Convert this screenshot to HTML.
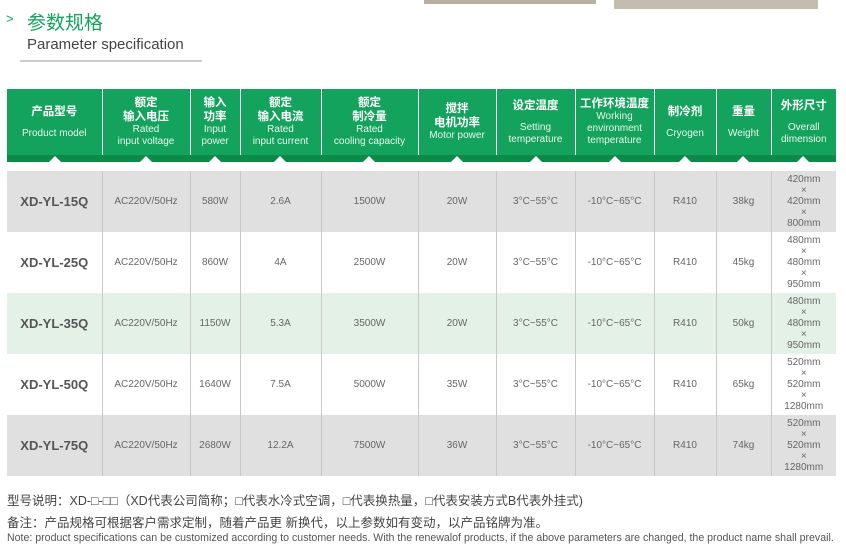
<!DOCTYPE html>
<html><head><meta charset="utf-8"><style>
*{margin:0;padding:0;box-sizing:border-box}
body{width:846px;height:555px;background:#fff;font-family:"Liberation Sans","Noto Sans CJK SC",sans-serif;position:relative;overflow:hidden;color:#444}
.abs{position:absolute}
table{border-collapse:collapse;position:absolute;left:7px;table-layout:fixed}
#hd td{background:#14a35c;color:#fff;text-align:center;vertical-align:middle;border-left:1px solid #fff;height:66px;font-size:10px;line-height:12px;position:relative}
#hd td:first-child{border-left:none}
.cn{font-size:11.5px;font-weight:bold;line-height:14px}
.en{font-weight:normal;color:#e8f6ee}
#strip{left:7px;top:155px;width:829px;height:7px;background:#0b8a48}
#bd td{text-align:center;vertical-align:middle;height:61px;font-size:10px;color:#666;border-left:1px solid #c8c8c8;font-family:"Liberation Sans",sans-serif}
#bd td:first-child{border-left:none;font-weight:bold;font-size:13px;color:#555}
.g td{background:#e0e0e0}.w td{background:#fff}.l td{background:#e3f1e6}
.dim{font-size:9.5px;line-height:11px}
.tri{position:absolute;top:156px;width:0;height:0;border-left:6px solid transparent;border-right:6px solid transparent;border-bottom:6px solid #fff}
</style></head><body>
<div class="abs" style="left:424px;top:0;width:172px;height:4px;background:#b8b0a0"></div>
<div class="abs" style="left:614px;top:0;width:204px;height:9px;background:#c4bcae"></div>
<div class="abs" style="left:6px;top:11px;font-size:13px;color:#14a35c">&gt;</div>
<div class="abs" style="left:27px;top:8px;font-size:19px;color:#14a35c">参数规格</div>
<div class="abs" style="left:27px;top:36px;font-size:15px;color:#444">Parameter specification</div>
<div class="abs" style="left:20px;top:60px;width:182px;height:2px;background:#ccc"></div>
<table id="hd" style="top:89px"><colgroup><col style="width:95px"><col style="width:88px"><col style="width:50px"><col style="width:81px"><col style="width:97px"><col style="width:78px"><col style="width:79px"><col style="width:79px"><col style="width:62px"><col style="width:55px"><col style="width:65px"></colgroup>
<tr>
<td><div class="cn">产品型号</div><div class="en" style="margin-top:9px">Product model</div></td>
<td><div class="cn">额定<br>输入电压</div><div class="en">Rated<br>input voltage</div></td>
<td><div class="cn">输入<br>功率</div><div class="en">Input<br>power</div></td>
<td><div class="cn">额定<br>输入电流</div><div class="en">Rated<br>input current</div></td>
<td><div class="cn">额定<br>制冷量</div><div class="en">Rated<br>cooling capacity</div></td>
<td><div class="cn">搅拌<br>电机功率</div><div class="en">Motor power</div></td>
<td><div class="cn">设定温度</div><div class="en" style="margin-top:9px">Setting<br>temperature</div></td>
<td><div class="cn">工作环境温度</div><div class="en">Working<br>environment<br>temperature</div></td>
<td><div class="cn">制冷剂</div><div class="en" style="margin-top:9px">Cryogen</div></td>
<td><div class="cn">重量</div><div class="en" style="margin-top:9px">Weight</div></td>
<td><div class="cn">外形尺寸</div><div class="en" style="margin-top:9px">Overall<br>dimension</div></td>
</tr></table>
<div class="abs" id="strip"></div>
<div class="tri" style="left:49px"></div><div class="tri" style="left:140px"></div><div class="tri" style="left:209px"></div><div class="tri" style="left:274px"></div><div class="tri" style="left:363px"></div><div class="tri" style="left:451px"></div><div class="tri" style="left:530px"></div><div class="tri" style="left:609px"></div><div class="tri" style="left:679px"></div><div class="tri" style="left:737px"></div><div class="tri" style="left:797px"></div>
<table id="bd" style="top:171px"><colgroup><col style="width:95px"><col style="width:88px"><col style="width:50px"><col style="width:81px"><col style="width:97px"><col style="width:78px"><col style="width:79px"><col style="width:79px"><col style="width:62px"><col style="width:55px"><col style="width:65px"></colgroup>
<tr class="g"><td>XD-YL-15Q</td><td>AC220V/50Hz</td><td>580W</td><td>2.6A</td><td>1500W</td><td>20W</td><td>3°C~55°C</td><td>-10°C~65°C</td><td>R410</td><td>38kg</td><td class="dim">420mm<br>×<br>420mm<br>×<br>800mm</td></tr>
<tr class="w"><td>XD-YL-25Q</td><td>AC220V/50Hz</td><td>860W</td><td>4A</td><td>2500W</td><td>20W</td><td>3°C~55°C</td><td>-10°C~65°C</td><td>R410</td><td>45kg</td><td class="dim">480mm<br>×<br>480mm<br>×<br>950mm</td></tr>
<tr class="l"><td>XD-YL-35Q</td><td>AC220V/50Hz</td><td>1150W</td><td>5.3A</td><td>3500W</td><td>20W</td><td>3°C~55°C</td><td>-10°C~65°C</td><td>R410</td><td>50kg</td><td class="dim">480mm<br>×<br>480mm<br>×<br>950mm</td></tr>
<tr class="w"><td>XD-YL-50Q</td><td>AC220V/50Hz</td><td>1640W</td><td>7.5A</td><td>5000W</td><td>35W</td><td>3°C~55°C</td><td>-10°C~65°C</td><td>R410</td><td>65kg</td><td class="dim">520mm<br>×<br>520mm<br>×<br>1280mm</td></tr>
<tr class="g"><td>XD-YL-75Q</td><td>AC220V/50Hz</td><td>2680W</td><td>12.2A</td><td>7500W</td><td>36W</td><td>3°C~55°C</td><td>-10°C~65°C</td><td>R410</td><td>74kg</td><td class="dim">520mm<br>×<br>520mm<br>×<br>1280mm</td></tr>
</table>
<div class="abs" style="left:7px;top:490px;font-size:12.5px;color:#444;white-space:nowrap">型号说明：XD-□-□□（XD代表公司简称；□代表水冷式空调，□代表换热量，□代表安装方式B代表外挂式)</div>
<div class="abs" style="left:7px;top:512px;font-size:12.5px;color:#444;white-space:nowrap">备注：产品规格可根据客户需求定制，随着产品更 新换代，以上参数如有变动，以产品铭牌为准。</div>
<div class="abs" style="left:7px;top:532px;font-size:10.6px;color:#555;white-space:nowrap">Note: product specifications can be customized according to customer needs. With the renewalof products, if the above parameters are changed, the product name shall prevail.</div>
</body></html>
